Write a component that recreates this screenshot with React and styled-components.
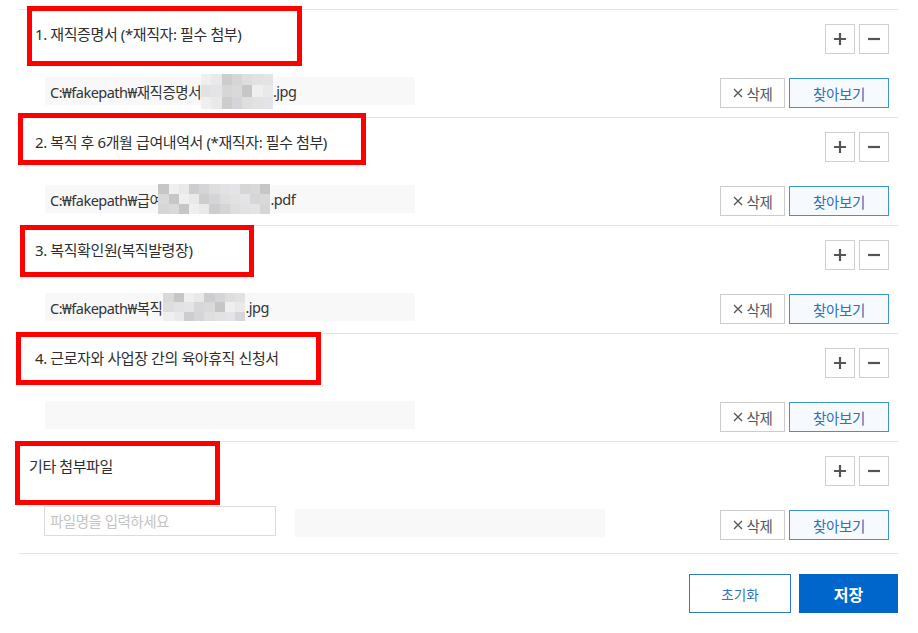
import React from "react";
import styled, { createGlobalStyle } from "styled-components";

const Global = createGlobalStyle`
  html, body { margin: 0; padding: 0; background: #fff; }
  body { font-family: "Noto Sans", "Noto Sans CJK KR", sans-serif; color: #333; }
  * { box-sizing: border-box; }
`;

const Page = styled.div`
  position: relative;
  width: 918px;
  height: 633px;
  padding: 9px 20px 0 19px;
`;

const Section = styled.section`
  border-top: 1px solid #e3e3e3;
  padding: 14px 9px ${(p) => (p.$extra ? 13 : 9)}px 0;
  display: flex;
  flex-direction: column;
  gap: 24px;
`;

const Header = styled.div`
  display: flex;
  align-items: flex-start;
  justify-content: space-between;
  height: 30px;
`;

const Title = styled.h3`
  margin: 0;
  padding-left: ${(p) => (p.$plain ? 10 : 16)}px;
  font-family: "Noto Sans", "Noto Sans CJK KR", sans-serif;
  font-size: 15px;
  font-weight: 400;
  line-height: 20px;
  letter-spacing: -0.4px;
  color: #2e2e2e;
`;

const PmGroup = styled.div`
  display: flex;
  gap: 4px;
`;

const PmButton = styled.button`
  width: 30px;
  height: 30px;
  padding: 0;
  border: 1px solid #cfcfcf;
  background: #fff;
  display: flex;
  align-items: center;
  justify-content: center;
  color: #555;
`;

const FileRow = styled.div`
  display: flex;
  align-items: flex-start;
  justify-content: space-between;
  height: 30px;
`;

const Left = styled.div`
  display: flex;
  align-items: flex-start;
  gap: 19px;
  padding-left: ${(p) => (p.$input ? 25 : 26)}px;
`;

const PathBox = styled.div`
  width: ${(p) => p.$w || 370}px;
  height: 28px;
  margin-top: ${(p) => p.$mt ?? -1}px;
  background: #f8f8f8;
  display: flex;
  align-items: center;
  padding-left: 5px;
  font-size: 14.5px;
  letter-spacing: -0.5px;
  color: #333;
  white-space: nowrap;
`;

const Mosaic = styled.div`
  display: grid;
  grid-template-columns: repeat(${(p) => p.$cols}, 1fr);
  grid-auto-rows: 1fr;
  width: ${(p) => p.$w}px;
  height: ${(p) => p.$h}px;
  flex-shrink: 0;
  margin-left: ${(p) => p.$ml || 0}px;
`;

const Cell = styled.span`
  background: ${(p) => p.$c};
`;

const NameInput = styled.input`
  width: 232px;
  height: 30px;
  margin-top: -4px;
  border: 1px solid #dcdcdc;
  padding: 0 5px;
  font-family: inherit;
  font-size: 14.5px;
  letter-spacing: -0.5px;
  color: #333;
  outline: none;
  &::placeholder { color: #c4c4c4; }
`;

const Actions = styled.div`
  display: flex;
  gap: 4px;
`;

const DeleteButton = styled.button`
  width: 65px;
  height: 30px;
  border: 1px solid #cccccc;
  background: #fff;
  font-family: inherit;
  font-size: 14.5px;
  color: #555;
  display: flex;
  align-items: center;
  justify-content: center;
  gap: 4px;
  padding: 0;
  letter-spacing: -0.4px;
`;

const BrowseButton = styled.button`
  width: 100px;
  height: 30px;
  border: 1px solid #3a95d2;
  background: #f6faff;
  font-family: inherit;
  font-size: 14.5px;
  color: #2f70b8;
  padding: 0;
  letter-spacing: -0.3px;
`;

const Footer = styled.div`
  border-top: 1px solid #e3e3e3;
  padding-top: 20px;
  display: flex;
  justify-content: flex-end;
  gap: 8px;
`;

const FootButton = styled.button`
  height: 39px;
  width: ${(p) => (p.$primary ? 99 : 102)}px;
  border: 1px solid ${(p) => (p.$primary ? "#0066cc" : "#2f7bc4")};
  background: ${(p) => (p.$primary ? "#0066cc" : "#fff")};
  color: ${(p) => (p.$primary ? "#fff" : "#2f72bd")};
  font-family: inherit;
  font-size: ${(p) => (p.$primary ? 16 : 13.5)}px;
  font-weight: ${(p) => (p.$primary ? 700 : 400)};
  padding: 0;
`;

const Annotation = styled.div`
  position: absolute;
  left: ${(p) => p.$x}px;
  top: ${(p) => p.$y}px;
  width: ${(p) => p.$w}px;
  height: ${(p) => p.$h}px;
  border: 5px solid #ff0000;
  pointer-events: none;
`;

const Plus = () => (
  <svg width="14" height="14" viewBox="0 0 14 14">
    <path d="M7 1v12M1 7h12" stroke="#555" strokeWidth="2.2" />
  </svg>
);
const Minus = () => (
  <svg width="14" height="14" viewBox="0 0 14 14">
    <path d="M1 7h12" stroke="#555" strokeWidth="2.2" />
  </svg>
);
const XIcon = () => (
  <svg width="10" height="10" viewBox="0 0 10 10">
    <path d="M1 1l8 8M9 1l-8 8" stroke="#555" strokeWidth="1.3" />
  </svg>
);

const shades = ["#e9e9ea", "#d9d9da", "#e2e2e3", "#cdcdce", "#c6c6c7", "#e2e4e7", "#d3d5d8", "#efeff0", "#d6d6d7", "#dedede"];

const MosaicBlock = ({ w, h, cols, rows, seed, ml }) => {
  const cells = [];
  for (let i = 0; i < cols * rows; i++) {
    cells.push(<Cell key={i} $c={shades[(i * 3 + seed * 7 + Math.floor(i / cols) * 4) % shades.length]} />);
  }
  return (
    <Mosaic $w={w} $h={h} $cols={cols} $ml={ml}>
      {cells}
    </Mosaic>
  );
};

const sections = [
  { title: "1. 재직증명서 (*재직자: 필수 첨부)", pre: "C:₩fakepath₩재직증명서", mosaic: { w: 72, h: 35, cols: 7, rows: 3, seed: 1 }, post: ".jpg" },
  { title: "2. 복직 후 6개월 급여내역서 (*재직자: 필수 첨부)", pre: "C:₩fakepath₩급여", mosaic: { w: 112, h: 30, cols: 11, rows: 3, seed: 2, ml: -4 }, post: ".pdf" },
  { title: "3. 복직확인원(복직발령장)", pre: "C:₩fakepath₩복직", mosaic: { w: 82, h: 28, cols: 8, rows: 3, seed: 3, ml: 1 }, post: ".jpg" },
  { title: "4. 근로자와 사업장 간의 육아휴직 신청서" },
];

const annotations = [
  { x: 27, y: 6, w: 275, h: 60 },
  { x: 18, y: 113, w: 348, h: 52 },
  { x: 20, y: 225, w: 234, h: 52 },
  { x: 16, y: 332, w: 305, h: 53 },
  { x: 15, y: 441, w: 205, h: 64 },
];

const SectionHeader = ({ title, plain }) => (
  <Header>
    <Title $plain={plain}>{title}</Title>
    <PmGroup>
      <PmButton aria-label="추가"><Plus /></PmButton>
      <PmButton aria-label="삭제"><Minus /></PmButton>
    </PmGroup>
  </Header>
);

const FileActions = () => (
  <Actions>
    <DeleteButton><XIcon />삭제</DeleteButton>
    <BrowseButton>찾아보기</BrowseButton>
  </Actions>
);

export default function App() {
  return (
    <>
      <Global />
      <Page>
        {sections.map((s, i) => (
          <Section key={i}>
            <SectionHeader title={s.title} />
            <FileRow>
              <Left>
                <PathBox>
                  {s.pre && <span>{s.pre}</span>}
                  {s.mosaic && <MosaicBlock {...s.mosaic} />}
                  {s.post && <span>{s.post}</span>}
                </PathBox>
              </Left>
              <FileActions />
            </FileRow>
          </Section>
        ))}
        <Section $extra>
          <SectionHeader title="기타 첨부파일" plain />
          <FileRow>
            <Left $input>
              <NameInput placeholder="파일명을 입력하세요" />
              <PathBox $w={310} $mt={-1} />
            </Left>
            <FileActions />
          </FileRow>
        </Section>
        <Footer>
          <FootButton>초기화</FootButton>
          <FootButton $primary>저장</FootButton>
        </Footer>
        {annotations.map((a, i) => (
          <Annotation key={i} $x={a.x} $y={a.y} $w={a.w} $h={a.h} />
        ))}
      </Page>
    </>
  );
}
